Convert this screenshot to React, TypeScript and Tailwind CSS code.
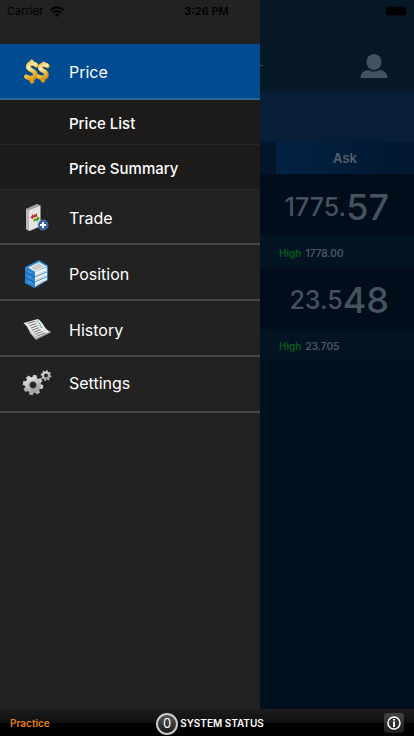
import type { ReactNode } from 'react'

const sans = "font-['Inter','Liberation_Sans',sans-serif]"

function DollarIcon() {
  return (
    <svg viewBox="0 0 30 30" className="size-[30px]" aria-hidden="true">
      <defs>
        <linearGradient id="gold" x1="0" y1="0" x2="0.3" y2="1">
          <stop offset="0" stopColor="#e2b444" />
          <stop offset="0.35" stopColor="#fff0b4" />
          <stop offset="0.65" stopColor="#efc457" />
          <stop offset="1" stopColor="#d99a1e" />
        </linearGradient>
      </defs>
      <g fill="none" strokeLinecap="round" strokeLinejoin="round">
        <g stroke="#c98a1c" strokeWidth="4.600">
          <path d="M14.500 8.500C12 5.500 6.500 6 6.500 10C6.500 14 13.500 13 13.500 17.500C13.500 22 8 22 4.500 20M10 5V7M10 21V24.500" />
          <path d="M25.500 9C23 7 18.500 8 18.500 11C18.500 14.500 24.500 13.500 24.500 17.500C24.500 21.500 20 21.500 17 20M22 7V8M21 21V23.500" />
        </g>
        <g stroke="url(#gold)" strokeWidth="3.800">
          <path d="M14 8C11.500 5 6 5.500 6 9.500C6 13.500 13 12.500 13 17C13 21.500 7.500 21.500 4 19.500M9.500 4.500V6.500M9.500 20.500V24" />
          <path d="M25 8.500C22.500 6.500 18 7.500 18 10.500C18 14 24 13 24 17C24 21 19.500 21 16.500 19.500M21.500 6.500V7.500M20.500 20.500V23" />
        </g>
      </g>
    </svg>
  )
}

function TradeIcon() {
  return (
    <svg viewBox="0 0 30 30" className="size-[30px]" aria-hidden="true">
      <path d="M4 6L15 1L17 2V24L8 28L4 26Z" fill="#8d8d8d" />
      <path d="M4 6L7 7V28L4 26Z" fill="#b9b9b9" />
      <path d="M7 7L18.500 2.500V23L7 28Z" fill="#e4e4e4" />
      <path d="M4 6L15 1L18.500 2.500L7 7Z" fill="#a2a2a2" />
      <path d="M8.500 14.500L11 10.800V12.400L15 10.600V13.400L11 14.800V16.200Z" fill="#c82525" />
      <path d="M18 15L15 13.200V14.800L11.500 16.200V18.800L15 17.400V19Z" fill="#5f9f27" />
      <circle cx="21" cy="22" r="5" fill="#2d5fa8" stroke="#6f96c9" strokeWidth="0.600" />
      <path d="M21 19V25M18 22H24" stroke="#fff" strokeWidth="2" />
    </svg>
  )
}

function PositionIcon() {
  return (
    <svg viewBox="0 0 30 30" className="size-[30px]" aria-hidden="true">
      <path d="M3 8L17 1L26 6.500V21L13 29L3 24Z" fill="#257fd0" />
      <path d="M6 8.500L17 3L25 7.500L13 13Z" fill="#e9e9e9" />
      <path d="M9 8.500L17 4.500L22 7.500L13 11.500Z" fill="#cbcbcb" />
      <path d="M13 13L25 8V21L13 27.500Z" fill="#f0f0f0" />
      <path d="M13 18L25 13M13 22.800L25 17.800" stroke="#4a92d2" strokeWidth="1" />
      <path d="M14 16.300L25 11.700M14 21.100L25 16.500M14 25.600L25 20.600" stroke="#c6c6c6" strokeWidth="1" />
      <path d="M3 8L13 13V29L3 24Z" fill="#2b83d3" />
      <path d="M3 13L13 18M3 18.500L13 23.500" stroke="#1761ac" strokeWidth="1" />
      <path d="M6 12.500L9.500 14M6 17.500L9.500 19M6 22.500L9.500 24" stroke="#5ba1e0" strokeWidth="1.200" />
    </svg>
  )
}

function HistoryIcon() {
  return (
    <svg viewBox="0 0 30 30" className="size-[30px]" aria-hidden="true">
      <path d="M1 8.500C7 13 9 20 14 25L29 17.500L28 16L14 21Z" fill="#8f8f8f" />
      <path d="M1.500 8L16 4C22 8 22 14 28 16.500L14.500 23C8 20 7 12 1.500 8Z" fill="#e9e9e9" />
      <path d="M1.500 8C5 11 7 13 8 18L14 24.500L16 22C9 20 7 12 1.500 8Z" fill="#c0c0c0" />
      <path d="M5.500 8.500L13 6.300M7.500 10.800L14.500 8.500M9 13L15.500 10.800M10 15.200L17 12.800M11.500 17.300L18.500 14.700M13 19.300L20.500 16.400M15 21L23 17.800" stroke="#6b6b6b" strokeWidth="0.900" />
      <path d="M14.500 6.500L16 6M16.500 8.500L18 8M17.500 10.700L19 10.200M18.700 12.700L20 12.200" stroke="#48a36c" strokeWidth="1.300" />
    </svg>
  )
}

const teeth = [0, 45, 90, 135, 180, 225, 270, 315]

function SettingsIcon() {
  return (
    <svg viewBox="0 0 30 30" className="size-[30px]" aria-hidden="true">
      <defs>
        <linearGradient id="steel" x1="0" y1="0" x2="0.500" y2="1">
          <stop offset="0" stopColor="#dedede" />
          <stop offset="1" stopColor="#a4a4a4" />
        </linearGradient>
      </defs>
      <g transform="translate(11 17)">
        {teeth.map((a) => (
          <path key={a} d="M-2.400 -7L-1.800 -10.200H1.800L2.400 -7Z" fill={a > 90 && a < 270 ? '#aeaeae' : '#cecece'} transform={`rotate(${a + 12})`} />
        ))}
        <circle r="5.700" fill="none" stroke="url(#steel)" strokeWidth="4.600" />
        <circle r="3.400" fill="none" stroke="#777" strokeWidth="0.800" />
      </g>
      <g transform="translate(24 7.500)">
        {teeth.map((a) => (
          <path key={a} d="M-1.200 -3.500L-0.800 -5.400H0.800L1.200 -3.500Z" fill="#b5b5b5" transform={`rotate(${a + 12})`} />
        ))}
        <circle r="3" fill="none" stroke="url(#steel)" strokeWidth="2.200" />
      </g>
    </svg>
  )
}

function StatusBar() {
  return (
    <div className="absolute inset-x-0 top-0 grid h-[22px] grid-cols-3 items-center pl-[7px] pr-2 text-[11px] text-black">
      <div className="flex items-center gap-1.5">
        <span>Carrier</span>
        <svg viewBox="0 0 16 12" className="h-[11px] w-4" aria-hidden="true">
          <g fill="none" stroke="#000" strokeWidth="2.200">
            <path d="M1 4.500C5 0.500 11 0.500 15 4.500" />
            <path d="M3.500 7.300C6 4.900 10 4.900 12.500 7.300" />
          </g>
          <path d="M5.500 9.200C7 7.900 9 7.900 10.500 9.200L8 12Z" />
        </svg>
      </div>
      <span className="text-center font-semibold">3:26 PM</span>
      <div className="h-2 w-5 justify-self-end rounded-[3px] bg-black ring-1 ring-black/30" />
    </div>
  )
}

const subItems = ['Price List', 'Price Summary']

const menuItems: { label: string; icon: ReactNode; className: string }[] = [
  { label: 'Trade', icon: <TradeIcon />, className: 'h-[55px] pt-[3px]' },
  { label: 'Position', icon: <PositionIcon />, className: 'h-14 pt-1' },
  { label: 'History', icon: <HistoryIcon />, className: 'h-14 pt-1' },
  { label: 'Settings', icon: <SettingsIcon />, className: 'h-14 pb-0.5' },
]

const quotes = [
  { base: '1775.', pips: '57', high: '1778.00' },
  { base: '23.5', pips: '48', high: '23.705' },
]

function Drawer() {
  return (
    <nav className="w-[260px] shrink-0 bg-[#222222] pt-11 text-white">
      <button className="flex h-14 w-full items-center gap-[17px] border-b-2 border-[#2a6591] bg-[#004b91] pl-[22px] pt-0.5 text-left text-[16px]">
        <DollarIcon />
        Price
      </button>
      <div className="bg-[#1c1b1a]">
        {subItems.map((label) => (
          <button key={label} className="flex h-[45px] w-full items-center border-b border-[#282828] pl-[69px] pt-[5px] text-left text-[15px] font-medium">
            {label}
          </button>
        ))}
      </div>
      {menuItems.map((item) => (
        <button
          key={item.label}
          className={`flex w-full items-center gap-[17px] border-b-2 border-[#48494a] pl-[22px] text-left text-[16px] ${item.className}`}
        >
          {item.icon}
          {item.label}
        </button>
      ))}
    </nav>
  )
}

function Quotes() {
  return (
    <main className="flex min-w-0 flex-1 flex-col bg-[#00101e]">
      <header className="flex h-[91px] items-center justify-between bg-[#071827] pr-[26px] pt-10">
        <span className="h-px w-[3px] bg-[#3f4c57]" />
        <button aria-label="Account">
          <svg viewBox="0 0 28 26" className="h-[26px] w-7" fill="#43525d" aria-hidden="true">
            <ellipse cx="14" cy="9" rx="7.500" ry="8" />
            <path d="M0.500 25C0.500 20 4 17.500 8.500 17C11.500 19 16.500 19 19.500 17C24 17.500 27.500 20 27.500 25Z" />
          </svg>
        </button>
      </header>
      <div className="h-[51px] bg-[#081e36]" />
      <div className="flex h-8 bg-[#03152b]">
        <h2 className="ml-4 flex flex-1 items-center justify-center bg-linear-to-r from-[#032244] to-[#02172f] pt-0.5 text-[13px] font-semibold text-[#53606c]">
          Ask
        </h2>
      </div>
      {quotes.map((q) => (
        <section key={q.base}>
          <div className="flex h-[62px] items-end justify-end bg-[#010d1a] pb-2.5 pr-[25px] font-medium text-[#46525e]">
            <span className="text-[25px] leading-[38px]">{q.base}</span>
            <span className="text-[36px] leading-[38px]">{q.pips}</span>
          </div>
          <p className="flex h-[31px] items-center gap-1 bg-[#021421] pb-px pl-[19px] pt-1 text-[10px] font-semibold text-[#4b5764]">
            <span className="text-[#075b1c]">High</span>
            {q.high}
          </p>
        </section>
      ))}
    </main>
  )
}

function Footer() {
  return (
    <footer className="grid h-[27px] grid-cols-[1fr_auto_1fr] items-center bg-linear-to-b from-[#1d1d1d] from-0% via-[#101010] via-50% to-black to-55% px-[10px] text-white">
      <span className="pt-0.5 text-[10px] font-semibold text-[#e07f17]">Practice</span>
      <button className="flex items-center gap-0.5 pl-1.5 pt-0.5 text-[10px] font-semibold">
        <span className="flex size-[22px] items-center justify-center rounded-full border-2 border-[#c9c9c9] bg-linear-to-b from-[#555] to-[#1c1c1c] text-[13px] font-normal">
          0
        </span>
        SYSTEM STATUS
      </button>
      <button aria-label="Information" className="flex size-5 items-center justify-center justify-self-end rounded-sm bg-linear-to-b from-[#454545] to-[#1d1d1d]">
        <svg viewBox="0 0 16 16" className="size-4" fill="none" stroke="#fff" aria-hidden="true">
          <circle cx="8" cy="8" r="6" strokeWidth="1.500" />
          <path d="M8 4V5.600M8 6.600V12" strokeWidth="2" />
        </svg>
      </button>
    </footer>
  )
}

export default function App() {
  return (
    <div className={`relative flex min-h-screen flex-col bg-black ${sans}`}>
      <div className="flex flex-1">
        <Drawer />
        <Quotes />
      </div>
      <Footer />
      <StatusBar />
    </div>
  )
}
